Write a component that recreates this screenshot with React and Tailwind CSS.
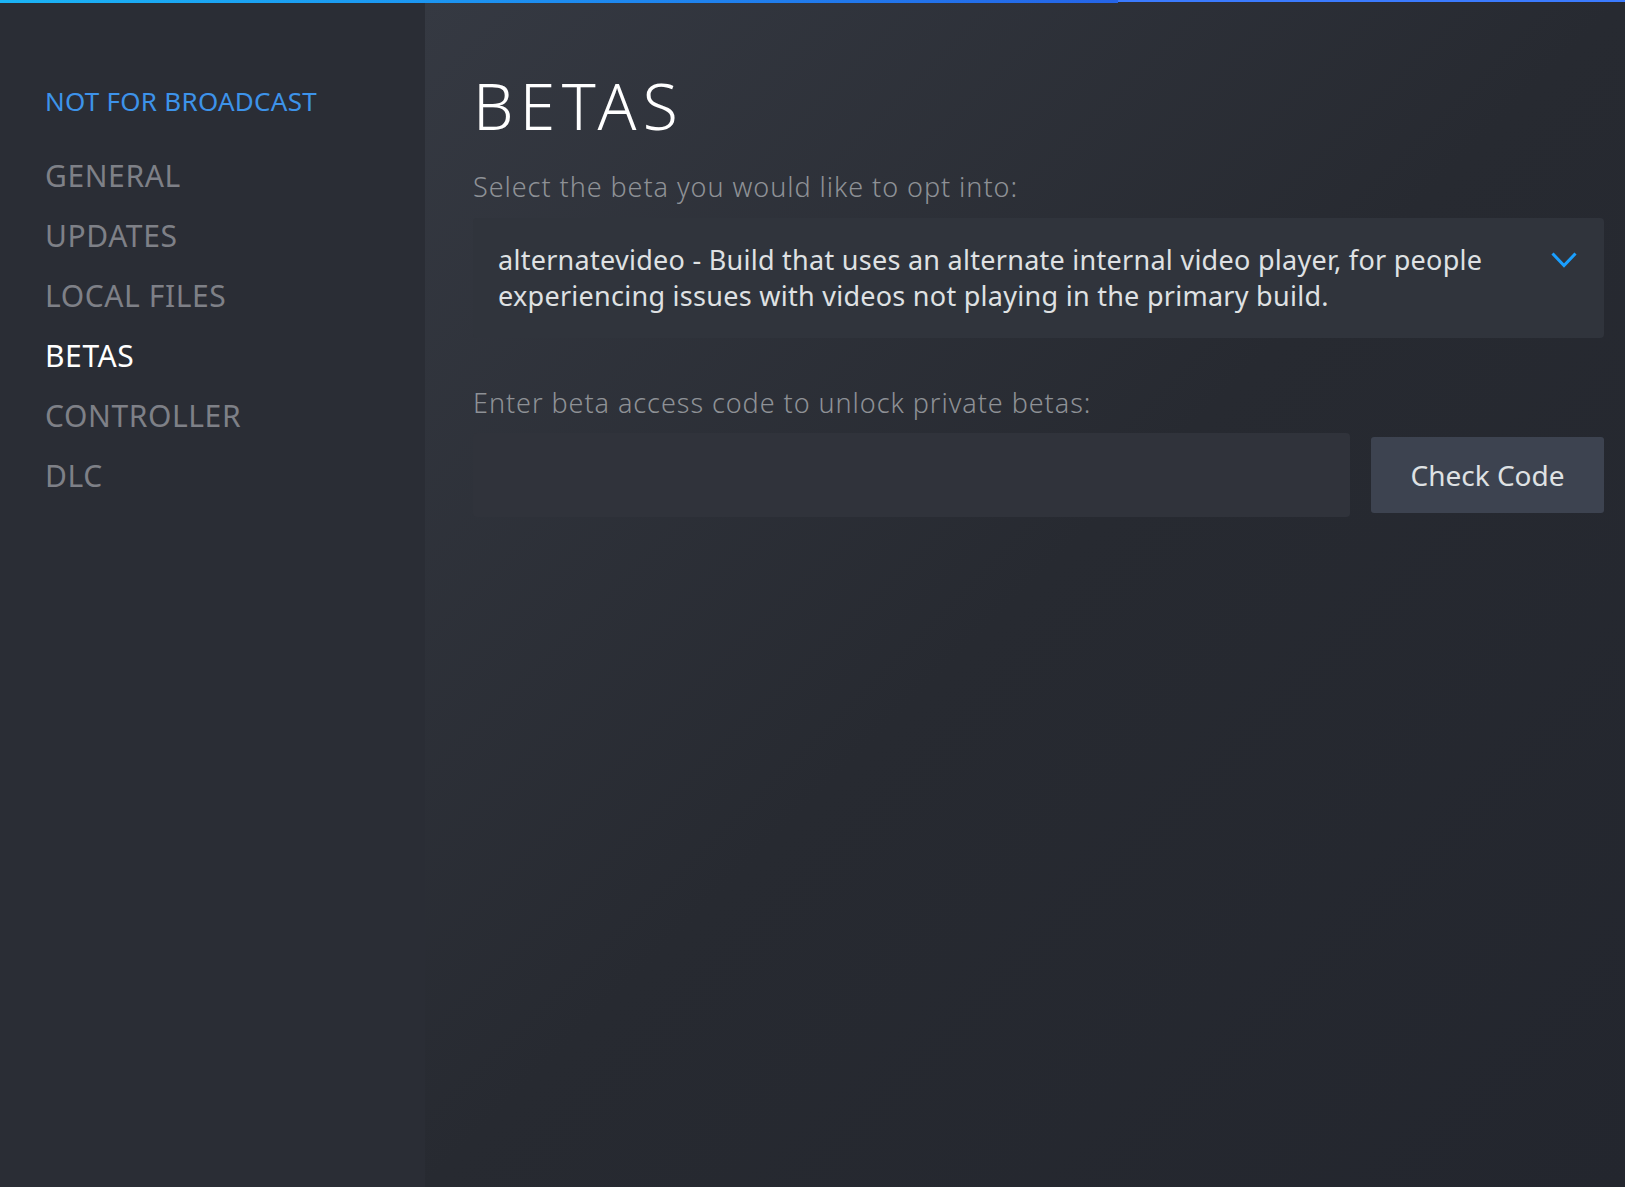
const NAV = ['GENERAL', 'UPDATES', 'LOCAL FILES', 'BETAS', 'CONTROLLER', 'DLC']

function Sidebar({ active }) {
    return (
        <div className="w-[425px] shrink-0 bg-[#2a2d35] pt-[71px] pl-[45px]">
            <div className="h-[60px] leading-[60px] text-[26px] tracking-[0.01em] text-[#3d93ea] mb-[15px]">
                NOT FOR BROADCAST
            </div>
            {NAV.map((item) => (
                <div
                    key={item}
                    className={
                        item === active
                            ? 'h-[60px] leading-[60px] text-[30px] tracking-[0.02em] text-white'
                            : 'h-[60px] leading-[60px] text-[30px] tracking-[0.02em] text-[#7e8087]'
                    }
                >
                    {item}
                </div>
            ))}
        </div>
    )
}

export default function App() {
    return (
        <div
            className="relative flex h-[1187px] w-full overflow-hidden"
            style={{ fontFamily: '"Noto Sans", "Open Sans", sans-serif' }}
        >
            {/* top loading line */}
            <div className="absolute top-0 left-0 right-0 h-[2px] bg-[#3b7bff]" />
            <div className="absolute top-0 left-0 w-[1118px] h-[3px] bg-gradient-to-r from-[#1bb4f5] via-[#1d8cf0] to-[#2564e8]" />

            <Sidebar active="BETAS" />

            {/* Main */}
            <div className="flex-1 bg-gradient-to-br from-[#353942] via-[#272a31] to-[#23262e] pt-[74px] pl-[48px] pr-[21px]">
                <h1 className="text-[64px] leading-[64px] font-light tracking-[0.1em] text-white">BETAS</h1>

                <div className="mt-[31px] text-[27px] leading-[36px] font-light tracking-[0.035em] text-[#8e9196]">
                    Select the beta you would like to opt into:
                </div>

                <div className="mt-[13px] flex items-start rounded-[4px] bg-[#30343c] pl-[25px] pr-[27px] py-[24px]">
                    <div className="flex-1 pr-[40px] text-[27px] leading-[36px] tracking-[0.01em] text-[#dfe1e3]">
                        alternatevideo - Build that uses an alternate internal video player, for people experiencing issues with videos not playing in the primary build.
                    </div>
                    <svg className="mt-[10px] shrink-0" width="26" height="16" viewBox="0 0 26 16" fill="none">
                        <polyline points="1.5,1.5 13,13.5 24.5,1.5" stroke="#1a9fff" strokeWidth="3" strokeLinejoin="miter" />
                    </svg>
                </div>

                <div className="mt-[47px] text-[27px] leading-[36px] font-light tracking-[0.035em] text-[#8e9196]">
                    Enter beta access code to unlock private betas:
                </div>

                <div className="mt-[12px] flex items-center gap-[21px]">
                    <input
                        type="text"
                        className="flex-1 h-[84px] rounded-[4px] bg-[#30333b] outline-none px-4 text-[26px] text-white"
                    />
                    <button className="w-[233px] h-[76px] rounded-[3px] bg-[#3d4350] text-[28px] text-[#dfe1e3]">
                        Check Code
                    </button>
                </div>
            </div>
        </div>
    )
}
